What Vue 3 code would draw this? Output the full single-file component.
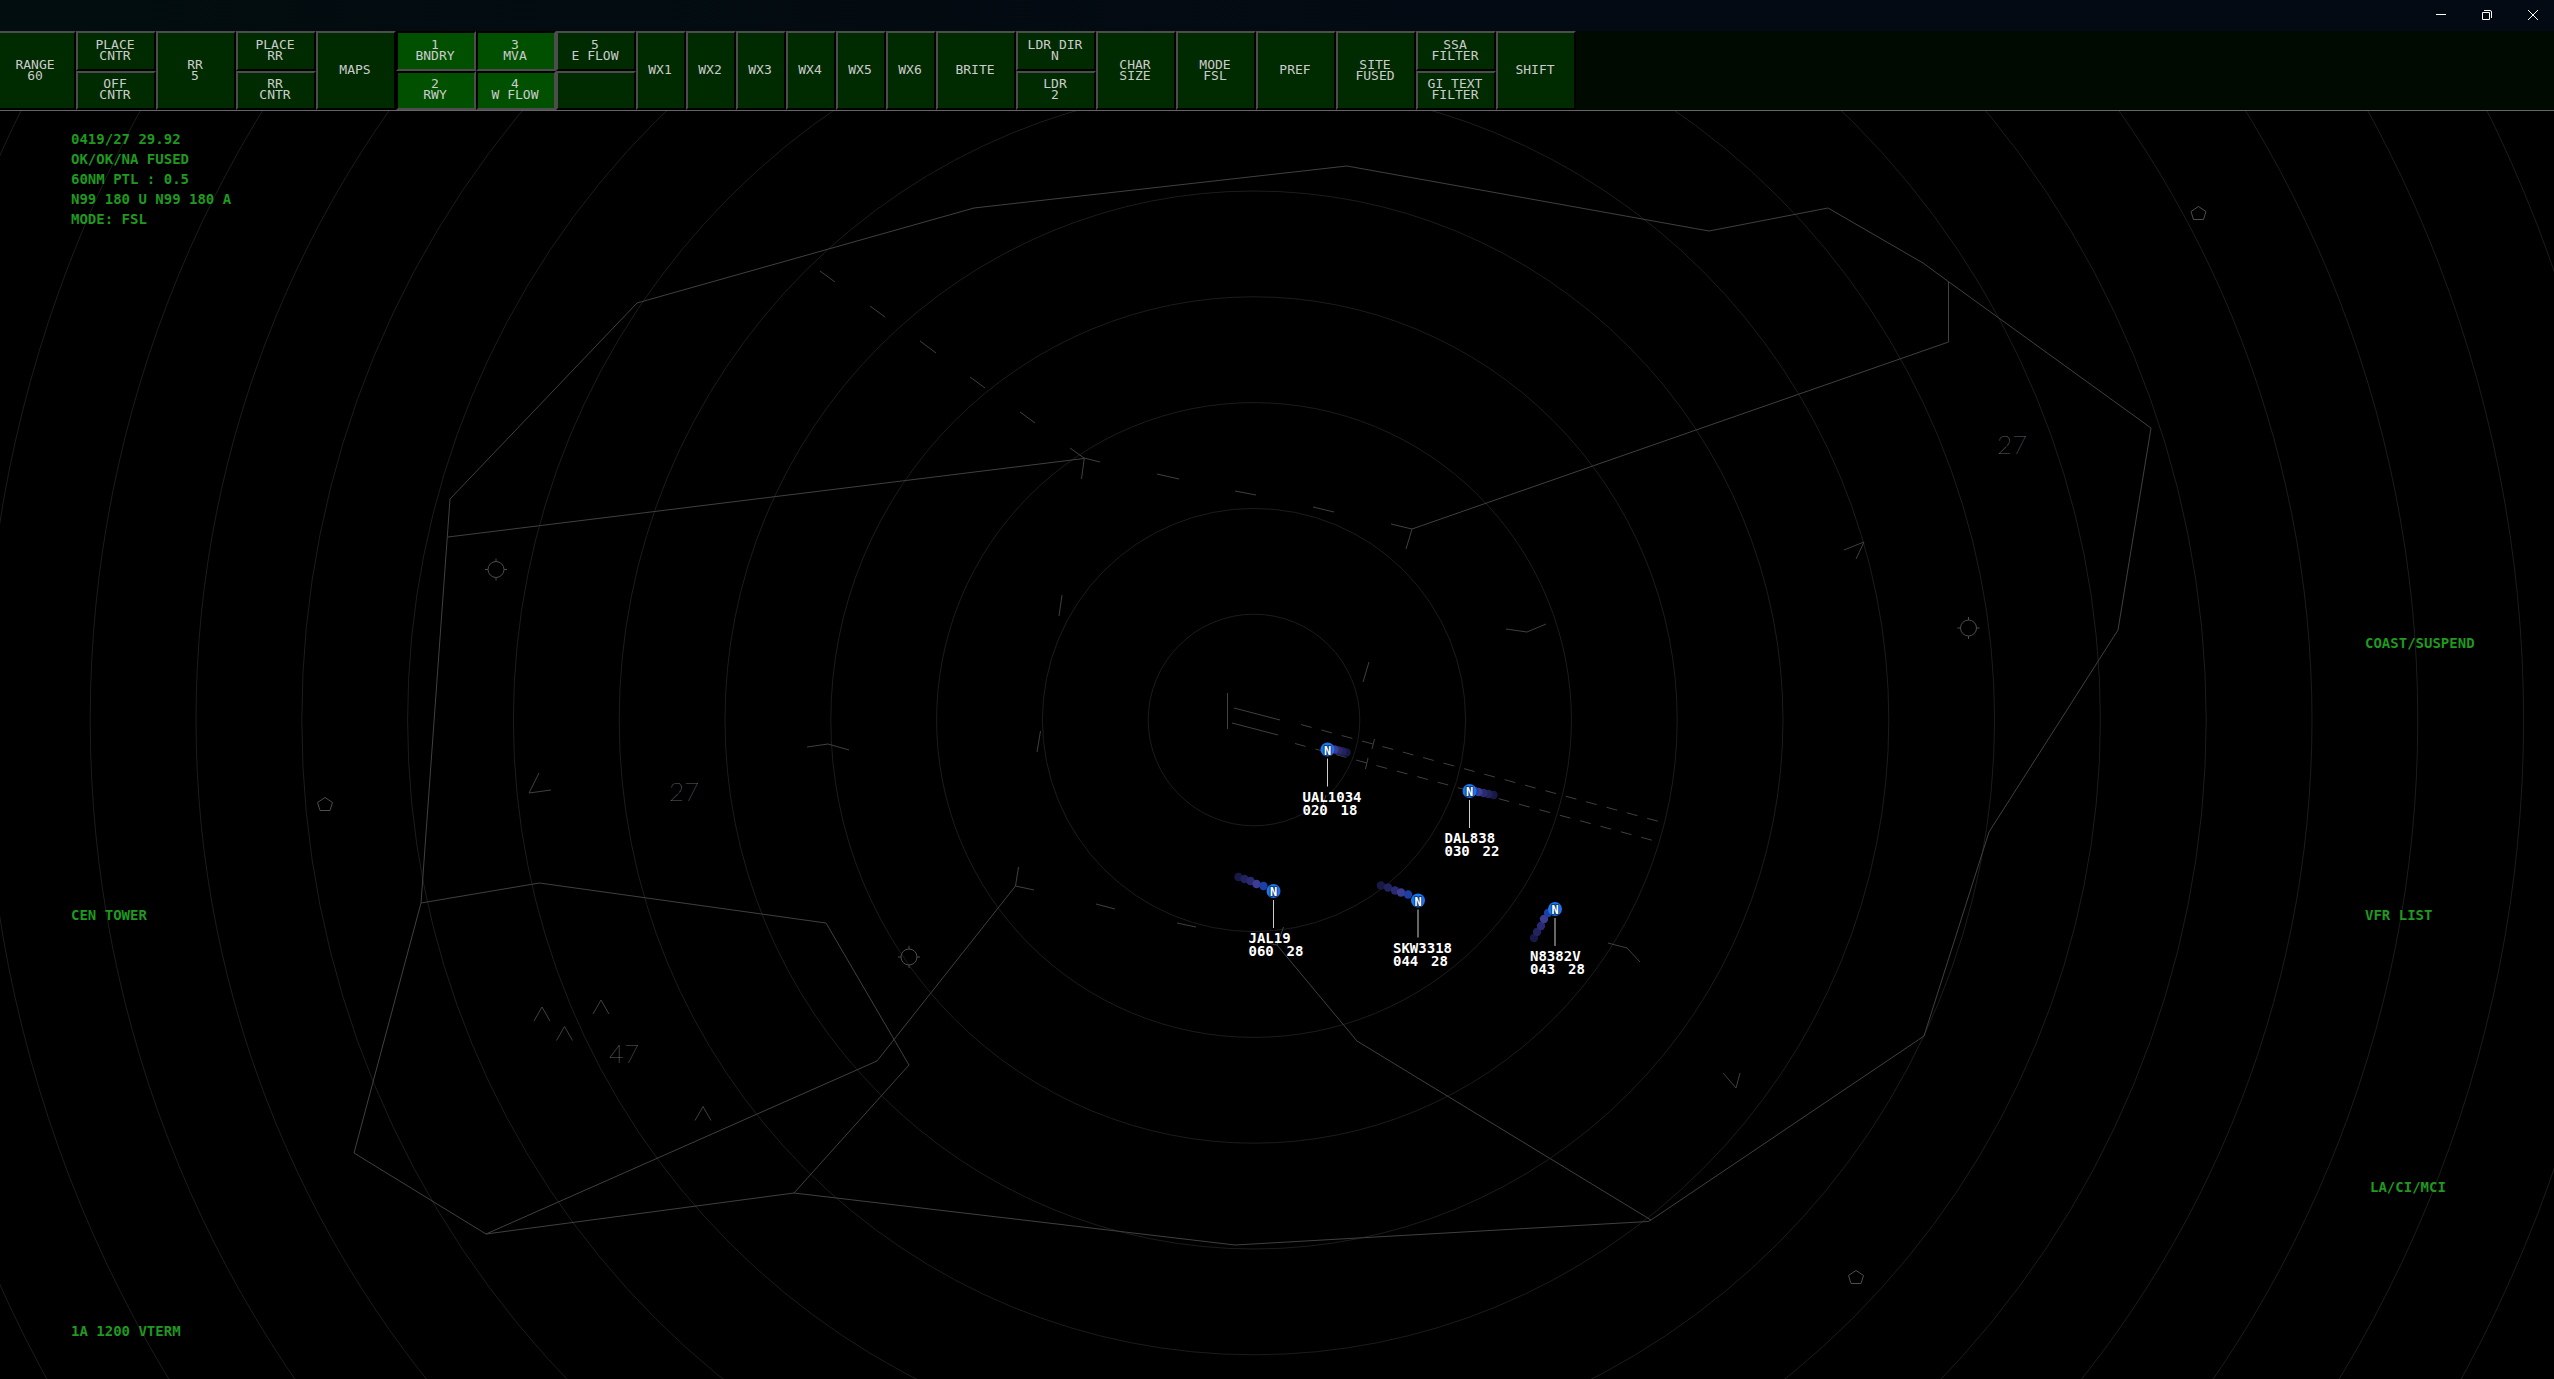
<script setup>
const single = (lines, w = 80) => ({ w, keys: [{ lines }] })
const pair = (a, b, on = [false, false]) => ({
  w: 80,
  keys: [{ lines: a, on: on[0] }, { lines: b, on: on[1] }],
})

const columns = [
  single(['RANGE', '60']),
  pair(['PLACE', 'CNTR'], ['OFF', 'CNTR']),
  single(['RR', '5']),
  pair(['PLACE', 'RR'], ['RR', 'CNTR']),
  single(['MAPS']),
  pair(['1', 'BNDRY'], ['2', 'RWY'], [true, true]),
  pair(['3', 'MVA'], ['4', 'W FLOW'], [true, true]),
  pair(['5', 'E FLOW'], ['']),
  ...[1, 2, 3, 4, 5, 6].map((n) => single([`WX${n}`], 50)),
  single(['BRITE']),
  pair(['LDR DIR', 'N'], ['LDR', '2']),
  single(['CHAR', 'SIZE']),
  single(['MODE', 'FSL']),
  single(['PREF']),
  single(['SITE', 'FUSED']),
  pair(['SSA', 'FILTER'], ['GI TEXT', 'FILTER']),
  single(['SHIFT']),
]

const centre = { x: 1254, y: 720 }
const rings = Array.from({ length: 14 }, (_, i) => (i + 1) * 105.8)

const boundaries = [
  '450,499 637,303 974,208 1347,166 1709,231 1828,208 1923,263 1949,282 2151,428 2118,630 1989,832 1924,1036 1651,1220 1648,1221.5 1235,1245 794,1193 486,1234 354,1153 421,903 450,499',
  '448,537 1084,458.5',
  '1948.5,282 1948.5,342 1412,529',
  '421,903 539.5,883 826,923 909,1065 794,1193',
  '486,1234 877,1061 1015.5,886',
  '1277,945 1357,1041 1651,1220',
]

const dashes = [
  '820,271 835,282', '870,306 885,317', '920,341 936,353', '970,377 985,388',
  '1020,412 1035,423', '1070,448 1084,458', '1084,458 1100,462', '1157,474 1179,479',
  '1235,491 1256,495', '1313,507 1334,512', '1391,524 1412,529',
  '1084.3,458 1081.5,479', '1062,595 1059,616', '1040.5,731 1037,752', '1018.5,867 1015.5,886',
  '1015.5,886 1034,890', '1096,904 1115,909', '1177,923 1196,927', '1268,943 1277,945',
  '1412,529 1406,549', '1369,662 1363,682', '1326,795 1320,815', '1283.5,927 1277,945',
]

const marks = [
  '1506,629 1527,632 1546,624', '807,747 828,744 849,750', '539,773 529,793 551,790',
  '1844,550 1864,542 1856,559', '1608,943 1627,948 1640,962', '1723,1073 1736,1088 1740,1073',
]

const carets = [[542, 1007], [601, 1000], [564.5, 1026.5], [703, 1106.5]]
const fixes = [[496, 569.5], [909, 957], [1968.5, 628]]
const pentagons = [[2198.5, 213.5], [325, 804.5], [1856, 1277.5]]
const altitudes = [
  { text: '27', x: 2012, y: 454 },
  { text: '27', x: 684, y: 801 },
  { text: '47', x: 624, y: 1063 },
]

const trailColours = ['#1a40a5', '#3c3c93', '#2a2a72', '#22225c', '#191948']
const aircraft = [
  { id: 'UAL1034', alt: '020', spd: '18', x: 1327.5, y: 749.5, trail: [[3, 0], [7, 0], [11, 1], [15, 2], [19, 3]] },
  { id: 'DAL838', alt: '030', spd: '22', x: 1469.5, y: 791, trail: [[5, 0], [9, 1], [14, 2], [19, 3], [24, 4]] },
  { id: 'JAL19', alt: '060', spd: '28', x: 1273.5, y: 891, trail: [[-10, -5], [-17, -7], [-23, -10], [-29, -12], [-35, -14]] },
  { id: 'SKW3318', alt: '044', spd: '28', x: 1418, y: 900.5, trail: [[-10, -6], [-17, -8], [-23, -10], [-30, -13], [-37, -15]] },
  { id: 'N8382V', alt: '043', spd: '28', x: 1555, y: 909, trail: [[-7, 4], [-11, 10], [-14, 17], [-18, 23], [-21, 29]] },
]

const status = ['0419/27 29.92', 'OK/OK/NA FUSED', '60NM PTL : 0.5', 'N99 180 U N99 180 A', 'MODE: FSL']
const lists = [
  { text: 'CEN TOWER', x: 71, y: 920 },
  { text: '1A 1200 VTERM', x: 71, y: 1336 },
  { text: 'COAST/SUSPEND', x: 2365, y: 648 },
  { text: 'VFR LIST', x: 2365, y: 920 },
  { text: 'LA/CI/MCI', x: 2370, y: 1192 },
]
</script>

<template>
  <div class="window">
    <header class="titlebar">
      <button class="caption" aria-label="Minimize">
        <svg viewBox="0 0 12 12"><path d="M1 5.5H11" /></svg>
      </button>
      <button class="caption" aria-label="Restore">
        <svg viewBox="0 0 12 12"><path d="M1.5 3.5h7v7h-7zM3 1.5h6a1.5 1.5 0 0 1 1.5 1.5v6" /></svg>
      </button>
      <button class="caption" aria-label="Close">
        <svg viewBox="0 0 12 12"><path d="M1 1l10 10M11 1L1 11" /></svg>
      </button>
    </header>

    <nav class="dcb">
      <div v-for="(col, i) in columns" :key="i" class="column" :class="{ narrow: col.w === 50 }">
        <button v-for="(key, j) in col.keys" :key="j" class="key" :class="{ on: key.on }">
          <span v-for="line in key.lines" :key="line">{{ line }}</span>
        </button>
      </div>
    </nav>

    <main class="scope">
      <svg class="map" viewBox="0 111 2554 1268" preserveAspectRatio="xMidYMid slice">
        <g class="rings">
          <circle v-for="r in rings" :key="r" :cx="centre.x" :cy="centre.y" :r="r" />
        </g>
        <g class="video-map">
          <polyline v-for="p in boundaries" :key="p" :points="p" />
          <polyline v-for="p in dashes" :key="p" :points="p" />
          <polyline v-for="p in marks" :key="p" :points="p" />
          <path v-for="[x, y] in carets" :key="x" :d="`M${x - 8} ${y + 14}L${x} ${y}l8 14`" />
          <path d="M1227.5 693v36M1234 708l46 12M1232 723l46 12" />
          <path class="final" d="M1301 724.5L1659 821.5M1295 743.5L1653 840.5" />
          <path d="M1374.5 739l-2.5 10M1368 758l-2.5 11" />
        </g>
        <g class="video-map symbols">
          <g v-for="[x, y] in fixes" :key="x" :transform="`translate(${x} ${y})`">
            <circle r="8" />
            <path d="M0-11v3M0 8v3M-11 0h3M8 0h3" />
          </g>
          <path
            v-for="[x, y] in pentagons" :key="x"
            :d="`M${x} ${y - 7}l7.5 5l-2.5 8h-10l-2.5 -8z`"
          />
        </g>
        <text v-for="a in altitudes" :key="a.x" class="altitude" :x="a.x" :y="a.y">{{ a.text }}</text>

        <g v-for="a in aircraft" :key="a.id" :transform="`translate(${a.x} ${a.y})`">
          <circle
            v-for="n in [4, 3, 2, 1, 0]" :key="n"
            :cx="a.trail[n][0]" :cy="a.trail[n][1]" r="4.2" :fill="trailColours[n]"
          />
          <circle r="7" class="target" />
          <text class="symbol" y="5">N</text>
          <path class="leader" d="M0 9v28" />
          <text class="block" x="-25" y="52">{{ a.id }}</text>
          <text class="block" x="-25" y="65">{{ a.alt }}</text>
          <text class="block" x="13" y="65">{{ a.spd }}</text>
        </g>

        <text v-for="(s, i) in status" :key="s" class="list" x="71" :y="144 + i * 20">{{ s }}</text>
        <text v-for="l in lists" :key="l.text" class="list" :x="l.x" :y="l.y">{{ l.text }}</text>
      </svg>
    </main>
  </div>
</template>

<style>
html,
body {
  margin: 0;
  background: #000;
}
</style>

<style scoped>
.window {
  display: flex;
  flex-direction: column;
  height: 100vh;
  overflow: hidden;
  background: #000;
  font-family: "DejaVu Sans Mono", "Liberation Mono", monospace;
}

.titlebar {
  display: flex;
  flex: none;
  justify-content: flex-end;
  height: 31px;
  margin-right: -2px;
  background: linear-gradient(90deg, #020d0f, #040a13 60%);
}

.caption {
  display: flex;
  align-items: center;
  justify-content: center;
  width: 46px;
  padding: 0 0 1px;
  border: 0;
  background: none;
}

.caption svg {
  width: 12px;
  height: 12px;
  fill: none;
  stroke: #fff;
}

.dcb {
  display: flex;
  flex: none;
  height: 79px;
  border-bottom: 1px solid #666;
  background: #000a00;
}

.column {
  display: flex;
  flex: none;
  flex-direction: column;
  width: 80px;
}

.column.narrow {
  width: 50px;
}

.column:first-child {
  margin-left: -4px;
}

.key {
  display: flex;
  flex: 1;
  flex-direction: column;
  align-items: center;
  justify-content: center;
  min-height: 0;
  padding: 0 2px 2px 0;
  border: 2px solid;
  border-color: #4d4d4d #000 #000 #4d4d4d;
  background: #002a00;
  color: #ccc;
  font: 13px/11px "DejaVu Sans Mono", "Liberation Mono", monospace;
  white-space: nowrap;
}

.key.on {
  border-color: #000 #4d4d4d #4d4d4d #000;
  background: #005000;
}

.scope {
  flex: 1;
  min-height: 0;
}

.map {
  display: block;
  width: 100%;
  height: 100%;
}

.rings {
  fill: none;
  stroke: #1c1c1c;
}

.video-map {
  fill: none;
  stroke: #404040;
}

.symbols {
  stroke: #4d4d4d;
}

.final {
  stroke-dasharray: 11 10.1;
}

.altitude {
  fill: #bbb;
  font: 100 26px Lato, "Open Sans", sans-serif;
  text-anchor: middle;
}

.target {
  fill: #1a75f0;
}

.leader {
  stroke: #ccc;
}

.symbol {
  fill: #fff;
  stroke: #0d3f85;
  stroke-width: 2px;
  paint-order: stroke;
  font-size: 12px;
  font-weight: bold;
  text-anchor: middle;
}

.block {
  fill: #fff;
  font-size: 14px;
  font-weight: bold;
}

.list {
  fill: #1f991f;
  font-size: 14px;
  font-weight: bold;
}
</style>
